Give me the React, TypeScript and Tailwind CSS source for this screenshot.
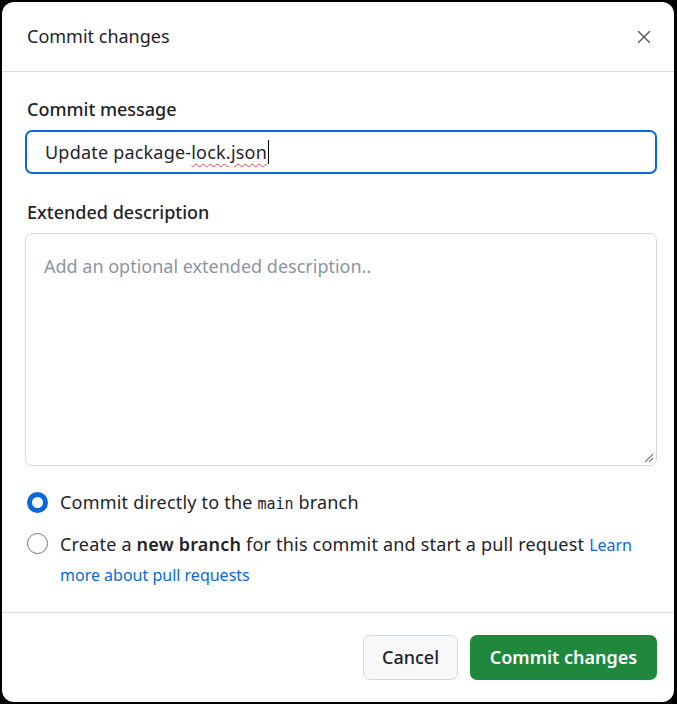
import { X } from "lucide-react";

export default function App() {
  return (
    <div
      className="w-[677px] h-[704px] bg-black pt-[2px] pl-[2px] pr-[3px] pb-[2px]"
      style={{ fontFamily: '"Noto Sans", "Open Sans", sans-serif' }}
    >
      <div className="h-full bg-white rounded-[12px] flex flex-col text-[#1f2328]">
        {/* header */}
        <div className="h-[70px] flex items-center justify-between pl-[25px] pr-[19px] border-b border-[#d8dee4]">
          <h2 className="text-[18px]">Commit changes</h2>
          <X className="w-[22px] h-[22px] text-[#59636e]" strokeWidth={1.6} />
        </div>

        {/* body */}
        <div className="flex-1 pl-[23px] pr-[17px] pt-[23px] flex flex-col border-b border-[#d8dee4]">
          <label className="text-[18px] font-medium pl-[2px] leading-[28px]">Commit message</label>
          <div className="mt-[7px] h-[44px] rounded-[7px] border-2 border-[#0969da] flex items-center pl-[18px] text-[18px]">
            <span className="tracking-[0.2px]">
              Update package-
              <span className="underline decoration-wavy decoration-[#e5484d] decoration-1 underline-offset-4">lock.json</span>
            </span>
            <span className="w-px h-[24px] bg-black ml-[1px]" />
          </div>

          <label className="mt-[24px] text-[18px] font-medium pl-[2px] leading-[28px]">Extended description</label>
          <div className="mt-[7px] h-[233px] rounded-[7px] border border-[#d1d9e0] relative pl-[18px] pt-[19px]">
            <span className="text-[18px] text-[#8c959f]">Add an optional extended description..</span>
            <svg className="absolute right-[2px] bottom-[2px]" width="12" height="12" viewBox="0 0 12 12">
              <path d="M11 3 L3 11 M11 7 L7 11" stroke="#7d8590" strokeWidth="1.2" />
            </svg>
          </div>

          <div className="mt-[23px] flex items-center gap-[12px] pl-[2px]">
            <span className="w-[21px] h-[21px] rounded-full border-[5px] border-[#0969da] bg-white shrink-0" />
            <span className="text-[18px] tracking-[0.2px]">
              Commit directly to the <code className="text-[15px] tracking-normal" style={{ fontFamily: '"DejaVu Sans Mono", monospace' }}>main</code> branch
            </span>
          </div>

          <div className="mt-[14px] flex items-start gap-[12px] pl-[2px]">
            <span className="mt-[3px] w-[21px] h-[21px] rounded-full border-[1.5px] border-[#6e7781] bg-white shrink-0" />
            <span className="text-[18px] leading-[29px] tracking-[0.2px]">
              Create a <span className="font-semibold">new branch</span> for this commit and start a pull request{" "}
              <a className="text-[#0969da] text-[16px] tracking-normal">Learn more about pull requests</a>
            </span>
          </div>
        </div>

        {/* footer */}
        <div className="h-[89px] flex items-center justify-end gap-[12px] pr-[17px]">
          <button className="h-[45px] px-[16px] w-[95px] rounded-[7px] border border-[#d1d9e0] bg-[#f6f8fa] text-[18px] font-medium">
            Cancel
          </button>
          <button className="h-[45px] w-[187px] rounded-[7px] bg-[#1f883d] text-white text-[18px] font-semibold">
            Commit changes
          </button>
        </div>
      </div>
    </div>
  );
}
